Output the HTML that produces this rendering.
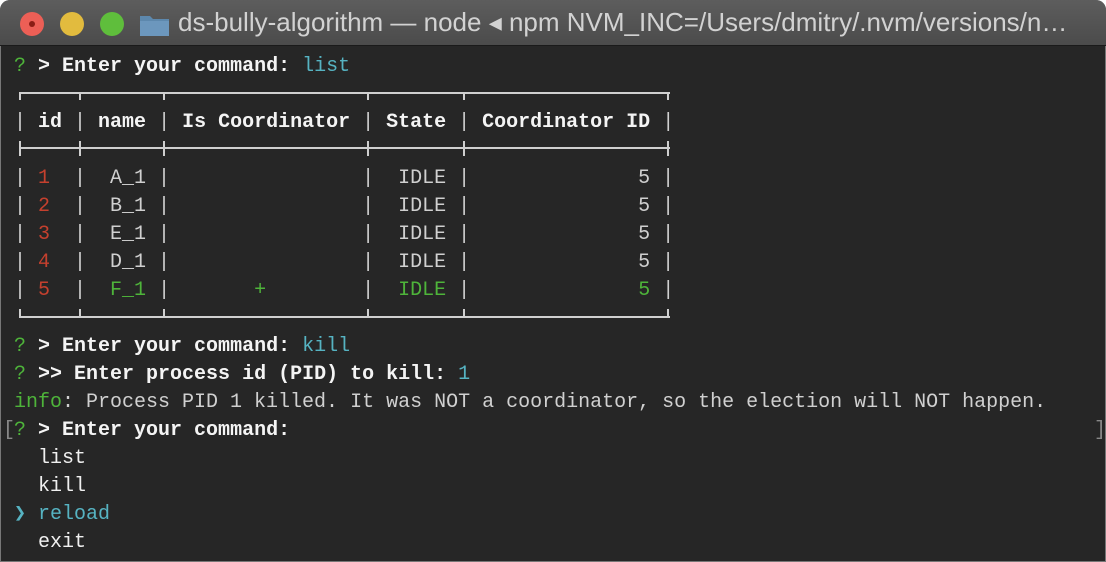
<!DOCTYPE html>
<html><head><meta charset="utf-8"><style>
html,body{margin:0;padding:0;background:#fff;width:1106px;height:562px;overflow:hidden}
.win{position:absolute;left:0;top:0;width:1106px;height:562px;background:#262626;border-radius:10px 10px 0 0;overflow:hidden;box-shadow:inset 0 0 0 1px #777}
.tb{position:absolute;left:0;top:0;width:1106px;height:45px;background:linear-gradient(#5d5d5d,#4b4b4b);border-bottom:1px solid #1a1a1a;border-radius:10px 10px 0 0}
.dot{position:absolute;top:12px;width:24px;height:24px;border-radius:50%}
.title{position:absolute;left:178px;top:7px;font:26px "Liberation Sans",sans-serif;color:#d2d2d2;white-space:pre}
.t{position:absolute;left:14px;font:20px/28px "Liberation Mono",monospace;color:#d0d0d0;white-space:pre}
b{color:#f4f4f4}
.g{color:#4eb43a}.c{color:#56b3c2}.r{color:#c5402e}.w{color:#f0f0f0}
.h{position:absolute;height:2px;background:#cfcfcf}
.v{position:absolute;width:2px;background:#cfcfcf}
</style></head><body><div class="win">
<div class="tb">
<div class="dot" style="left:20px;background:#ec5f56"><div style="position:absolute;left:9px;top:9px;width:6px;height:6px;border-radius:50%;background:#8a1d15"></div></div>
<div class="dot" style="left:60px;background:#e2bb3e"></div>
<div class="dot" style="left:100px;background:#5fbe3c"></div>
<svg style="position:absolute;left:139px;top:13px" width="31" height="24"><path d="M1 3h10l3 3h16v17H1z" fill="#5d88ad"/><path d="M1 8h29v15H1z" fill="#6c97bd"/></svg>
<div class="title">ds-bully-algorithm — node ◂ npm NVM_INC=/Users/dmitry/.nvm/versions/n…</div>
</div>
<div class="t" style="top:53px"><span class="g">?</span> <b>&gt; Enter your command:</b> <span class="c">list</span></div>
<div class="t" style="top:109px">| <b>id</b> | <b>name</b> | <b>Is Coordinator</b> | <b>State</b> | <b>Coordinator ID</b> |</div>
<div class="t" style="top:165px">| <span class="r">1</span>  |  A_1 |                |  IDLE |              5 |</div>
<div class="t" style="top:193px">| <span class="r">2</span>  |  B_1 |                |  IDLE |              5 |</div>
<div class="t" style="top:221px">| <span class="r">3</span>  |  E_1 |                |  IDLE |              5 |</div>
<div class="t" style="top:249px">| <span class="r">4</span>  |  D_1 |                |  IDLE |              5 |</div>
<div class="t" style="top:277px">| <span class="r">5</span>  |  <span class="g">F_1</span> |       <span class="g">+</span>        |  <span class="g">IDLE</span> |              <span class="g">5</span> |</div>
<div class="h" style="left:19px;top:92px;width:651px"></div>
<div class="h" style="left:19px;top:147px;width:651px"></div>
<div class="h" style="left:19px;top:316px;width:651px"></div>
<div class="v" style="left:19px;top:92px;height:8px"></div><div class="v" style="left:79px;top:92px;height:8px"></div><div class="v" style="left:163px;top:92px;height:8px"></div><div class="v" style="left:367px;top:92px;height:8px"></div><div class="v" style="left:463px;top:92px;height:8px"></div><div class="v" style="left:667px;top:92px;height:8px"></div>
<div class="v" style="left:19px;top:141px;height:15px"></div><div class="v" style="left:79px;top:141px;height:15px"></div><div class="v" style="left:163px;top:141px;height:15px"></div><div class="v" style="left:367px;top:141px;height:15px"></div><div class="v" style="left:463px;top:141px;height:15px"></div><div class="v" style="left:667px;top:141px;height:15px"></div>
<div class="v" style="left:19px;top:309px;height:9px"></div><div class="v" style="left:79px;top:309px;height:9px"></div><div class="v" style="left:163px;top:309px;height:9px"></div><div class="v" style="left:367px;top:309px;height:9px"></div><div class="v" style="left:463px;top:309px;height:9px"></div><div class="v" style="left:667px;top:309px;height:9px"></div>
<div class="t" style="top:333px"><span class="g">?</span> <b>&gt; Enter your command:</b> <span class="c">kill</span></div>
<div class="t" style="top:361px"><span class="g">?</span> <b>&gt;&gt; Enter process id (PID) to kill:</b> <span class="c">1</span></div>
<div class="t" style="top:389px"><span class="g">info</span>: Process PID 1 killed. It was NOT a coordinator, so the election will NOT happen.</div>
<div class="t" style="top:417px;left:3px;color:#888">[</div>
<div class="t" style="top:417px;left:1094px;color:#888">]</div>
<div class="t" style="top:417px"><span class="g">?</span> <b>&gt; Enter your command:</b></div>
<div class="t w" style="top:445px">  list</div>
<div class="t w" style="top:473px">  kill</div>
<div class="t" style="top:501px"><span class="c">❯ reload</span></div>
<div class="t w" style="top:529px">  exit</div>
</div></body></html>
